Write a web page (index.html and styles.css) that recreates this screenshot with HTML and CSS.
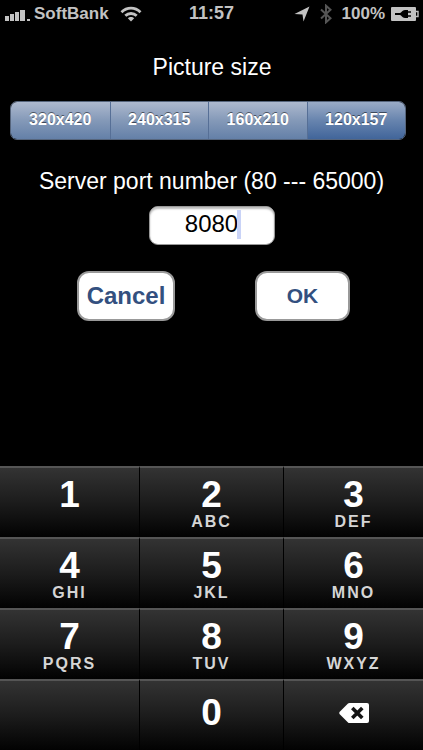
FILE: index.html
```html
<!DOCTYPE html>
<html lang="en">
<head>
    <meta charset="UTF-8">
    <meta name="viewport" content="width=device-width, initial-scale=1.0">
    <title>Settings</title>
    <link rel="stylesheet" href="styles.css">
</head>
<body>
    <header class="status-bar">
        <div class="status-left">
            <svg class="signal" width="26" height="12" viewBox="0 0 26 12" fill="currentColor" aria-hidden="true">
                <rect x="1" y="7" width="4" height="5"/>
                <rect x="6" y="5" width="4" height="7"/>
                <rect x="11" y="3" width="4" height="9"/>
                <rect x="16" y="1" width="5" height="11"/>
                <rect x="23" y="10" width="3" height="2"/>
            </svg>
            <span>SoftBank</span>
            <svg class="wifi" width="22" height="16" viewBox="0 0 22 16" fill="none" stroke="currentColor" aria-hidden="true">
                <path d="M1.5 6.2C7 .8 15 .8 20.5 6.2" stroke-width="2.8"/>
                <path d="M5.3 9.8C8.5 6.7 13.5 6.7 16.7 9.8" stroke-width="2.8"/>
                <path d="M11 15.5L7.8 12.3C9.5 10.6 12.5 10.6 14.2 12.3Z" fill="currentColor" stroke="none"/>
            </svg>
        </div>
        <span class="time">11:57</span>
        <div class="status-right">
            <svg width="16" height="16" viewBox="0 0 16 16" fill="currentColor" aria-hidden="true">
                <path d="M15.500 .5L9.500 15.500L8.500 8.500L.5 8Z"/>
            </svg>
            <svg class="bluetooth" width="12" height="20" viewBox="0 0 12 20" fill="none" stroke="currentColor" stroke-width="2" aria-hidden="true">
                <path d="M1 5.500L10.500 14.200L6 18.300V1.700L10.500 5.800L1 14.500"/>
            </svg>
            <span>100%</span>
            <svg class="battery" width="28" height="14" viewBox="0 0 28 14" aria-hidden="true">
                <rect width="25" height="14" rx="1" fill="currentColor"/>
                <path d="M25 4.500H27V9.500H25" fill="none" stroke="currentColor" stroke-width="1.4"/>
                <path d="M4 6H9C10.500 6 11 3 14 3H17V4.200H20V5.800H17V8.200H20V9.800H17V11H14C11 11 10.500 8 9 8H4Z" fill="#000"/>
            </svg>
        </div>
    </header>

    <form class="settings">
        <fieldset class="size-group">
            <legend>Picture size</legend>
            <div class="segments">
                <label class="segment"><input type="radio" name="size" value="320x420">320x420</label>
                <label class="segment"><input type="radio" name="size" value="240x315">240x315</label>
                <label class="segment"><input type="radio" name="size" value="160x210">160x210</label>
                <label class="segment"><input type="radio" name="size" value="120x157" checked>120x157</label>
            </div>
        </fieldset>

        <label class="port-label" for="port">Server port number (80 --- 65000)</label>
        <div class="port-field">
            <input type="text" id="port" name="port" inputmode="numeric" value="8080">
            <span class="caret"></span>
        </div>

        <div class="actions">
            <button type="button" class="action cancel">Cancel</button>
            <button type="button" class="action ok">OK</button>
        </div>
    </form>

    <div class="keypad">
        <button type="button" class="key">1<small></small></button>
        <button type="button" class="key">2<small>ABC</small></button>
        <button type="button" class="key">3<small>DEF</small></button>
        <button type="button" class="key">4<small>GHI</small></button>
        <button type="button" class="key">5<small>JKL</small></button>
        <button type="button" class="key">6<small>MNO</small></button>
        <button type="button" class="key">7<small>PQRS</small></button>
        <button type="button" class="key">8<small>TUV</small></button>
        <button type="button" class="key">9<small>WXYZ</small></button>
        <div class="key"></div>
        <button type="button" class="key single">0</button>
        <button type="button" class="key single" aria-label="Delete">
            <svg width="30" height="20" viewBox="0 0 30 20" aria-hidden="true">
                <path d="M9 .5Q9.500 0 10.500 0H28Q30 0 30 2V18Q30 20 28 20H10.500Q9.500 20 9 19.500L.5 11Q0 10 .5 9Z" fill="#fff"/>
                <path d="M13.300 5L23.300 15M23.300 5L13.300 15" stroke="#151515" stroke-width="3.6"/>
            </svg>
        </button>
    </div>

    <script>
        const port = document.getElementById('port');

        document.querySelectorAll('.key').forEach(key => {
            key.addEventListener('click', () => {
                if (key.getAttribute('aria-label') === 'Delete') {
                    port.value = port.value.slice(0, -1);
                } else if (key.textContent) {
                    port.value += key.textContent.trim()[0];
                }
            });
        });
    </script>
</body>
</html>
```
FILE: styles.css
```css
* {
    box-sizing: border-box;
}
body {
    display: flex;
    flex-direction: column;
    min-height: 100vh;
    margin: 0;
    background-color: #000;
    color: white;
    font-family: "Liberation Sans", Arial, sans-serif;
}
button, input {
    font-family: inherit;
}
svg {
    display: block;
    flex-shrink: 0;
}

/* Status bar */
.status-bar {
    display: grid;
    grid-template-columns: 1fr auto 1fr;
    align-items: center;
    height: 27px;
    padding: 0 4px;
    color: #c2c2c2;
    font-size: 17px;
    font-weight: bold;
}
.status-left, .status-right {
    display: flex;
    align-items: center;
}
.status-left {
    gap: 4px;
}
.status-right {
    justify-content: flex-end;
    gap: 10px;
}
.time {
    font-size: 18px;
}
.signal {
    margin-top: 2px;
}
.wifi {
    margin-left: 7px;
}
.bluetooth {
    color: #555;
}
.battery {
    margin-left: -4px;
}

/* Settings form */
.settings {
    display: flex;
    flex-direction: column;
    align-items: center;
    padding-top: 27px;
}
.size-group {
    width: 100%;
    margin: 0;
    padding: 0 17px 0 10px;
    border: 0;
}
.size-group legend {
    margin: 0 auto;
    padding: 0 0 0 8px;
    font-size: 23px;
    line-height: 27px;
}
.segments {
    display: grid;
    grid-template-columns: repeat(4, 1fr);
    height: 39px;
    margin-top: 20px;
    border: 1px solid #56657c;
    border-radius: 7px;
    overflow: hidden;
}
.segment {
    position: relative;
    display: flex;
    align-items: center;
    justify-content: center;
    padding-bottom: 2px;
    background: linear-gradient(#adb9ce, #8499b8 50%, #6480a8);
    font-size: 16px;
    font-weight: bold;
    text-shadow: 0 -1px 0 rgba(0, 0, 0, 0.5);
    cursor: pointer;
}
.segment + .segment {
    border-left: 1px solid #566f96;
}
.segment:has(:checked) {
    background: linear-gradient(#9aabc6, #6784ae 50%, #41659a);
}
.segment input {
    position: absolute;
    opacity: 0;
}
.port-label {
    margin-top: 28px;
    font-size: 23px;
    line-height: 27px;
}
.port-field {
    position: relative;
    margin-top: 11px;
}
.port-field input {
    display: block;
    width: 126px;
    height: 39px;
    padding: 0 0 3px;
    border: 1px solid #999;
    border-radius: 9px;
    background-color: white;
    box-shadow: inset 0 2px 2px #bbb;
    color: black;
    font-size: 24px;
    text-align: center;
}
.caret {
    position: absolute;
    top: 4px;
    left: calc(50% + 25px);
    width: 4px;
    height: 29px;
    background-color: #c9d3f7;
}
.actions {
    display: flex;
    justify-content: center;
    gap: 80px;
    margin-top: 26px;
    padding-left: 4px;
}
.action {
    width: 98px;
    height: 50px;
    padding: 0;
    border: 2px solid #999;
    border-radius: 12px;
    background-color: white;
    color: #33507f;
    font-weight: bold;
    cursor: pointer;
}
.cancel {
    font-size: 24px;
}
.ok {
    width: 95px;
    font-size: 21px;
}

/* Keypad */
.keypad {
    display: grid;
    grid-template-columns: 139fr 144fr 140fr;
    grid-auto-rows: 71px;
    margin-top: auto;
}
.key {
    display: flex;
    flex-direction: column;
    align-items: center;
    padding: 8px 0 0;
    border: 0;
    border-top: 2px solid #555;
    border-radius: 0;
    background: linear-gradient(#333, #1c1c1c 50%, #020202);
    color: white;
    font-size: 37px;
    font-weight: bold;
    line-height: 37px;
}
.key:not(:nth-child(3n + 1)) {
    border-left: 1px solid #000;
}
.key small {
    color: #d5d5d5;
    font-size: 16px;
    line-height: 18px;
    letter-spacing: 2px;
}
.single {
    justify-content: center;
    padding: 0 0 6px;
}
```
